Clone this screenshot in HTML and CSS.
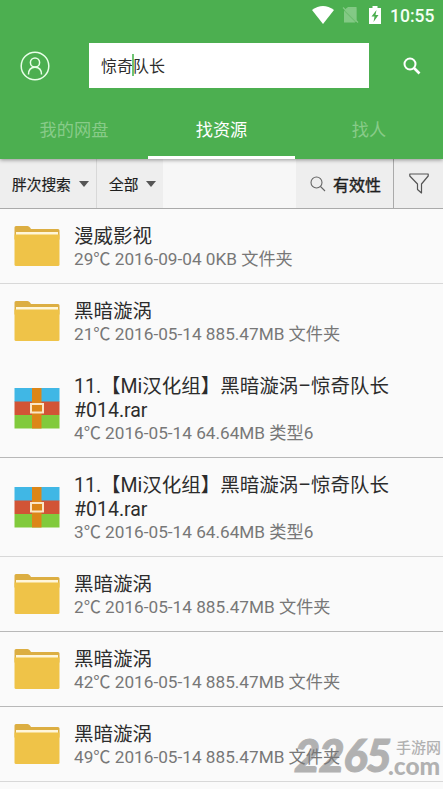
FILE: index.html
```
<!DOCTYPE html>
<html lang="zh-CN">
<head>
<meta charset="utf-8">
<title>找资源</title>
<link rel="stylesheet" href="styles.css">
</head>
<body>
<svg class="defs" width="0" height="0" aria-hidden="true">
  <symbol id="folder" viewBox="0 0 46 42">
    <path d="M.5 2.500A1.500 1.500 0 0 1 2 1h11.500q1.500 0 2.500 1.500l1 1.500H44a1.500 1.500 0 0 1 1.500 1.500v9H.5z" fill="#dcae42"/>
    <path d="M2 7h42v4H2z" fill="#fff6da"/>
    <path d="M.5 9.500h45v30a1.500 1.500 0 0 1-1.500 1.500H2a1.500 1.500 0 0 1-1.500-1.500z" fill="#efc348"/>
  </symbol>
  <symbol id="archive" viewBox="0 0 46 42">
    <path d="M.5 1h45v14H.5z" fill="#40b7e5"/>
    <path d="M.5 14.500h45V28H.5z" fill="#d15436"/>
    <path d="M.5 28h45v13.500H.5z" fill="#81ca3c"/>
    <path d="M18 1h9.500v40.500H18z" fill="#dc8618"/>
    <path d="M17 17h12v8.500H17z" fill="#dc8618" stroke="#fbe6c6" stroke-width="2"/>
  </symbol>
</svg>
<header class="appbar">
  <div class="status">
    <svg class="wifi" width="22" height="18" viewBox="0 0 22 18"><path d="M0 4Q11-4 22 4L11 18z" fill="#fff"/></svg>
    <svg class="sim" width="17" height="18" viewBox="0 0 17 18"><path d="M6 1h8.500v13.500L3 3.500zM2 5l11.500 11.500H2z" fill="#83c985"/><path d="M4.500 2.500H14.500v13.500H2V5z" fill="#83c985" opacity=".6"/><path d="M1 1.500l15 15" stroke="#83c985" stroke-width="1.300"/></svg>
    <svg class="battery" width="12" height="18" viewBox="0 0 12 18"><path d="M3.500 0h5v2H12v16H0V2h3.500z" fill="#fff"/><path d="M7.500 4L2.500 10.500h3L4.500 16l5-7h-3z" fill="#4caf50"/></svg>
    <span class="clock">10:55</span>
  </div>
  <div class="searchbar">
    <svg class="avatar" width="30" height="30" viewBox="0 0 30 30" fill="none" stroke="#e8ffe8" stroke-width="1.500"><circle cx="15" cy="15" r="13.800"/><circle cx="15" cy="11.500" r="4.600"/><path d="M8.500 23.500c0-4.500 2.500-7.300 6.500-7.300s6.500 2.800 6.500 7.300"/></svg>
    <div class="field"><span>惊奇</span><i class="caret"></i><span>队长</span></div>
    <svg class="go" width="18" height="18" viewBox="0 0 18 18" fill="none" stroke="#fff" stroke-width="2"><circle cx="7" cy="7" r="5.500"/><path d="M11 11l5.500 5.500" stroke-width="2.600"/></svg>
  </div>
  <nav class="tabs"><a>我的网盘</a><a class="on">找资源</a><a>找人</a></nav>
</header>
<section class="filters">
  <div class="drop source">胖次搜索<i class="arrow"></i></div>
  <div class="drop kind">全部<i class="arrow"></i></div>
  <div class="space"></div>
  <div class="valid"><svg width="16" height="16" viewBox="0 0 16 16" fill="none" stroke="#666" stroke-width="1.100"><circle cx="6.500" cy="6.500" r="5.500"/><path d="M10.500 10.500l4.500 4.500"/></svg>有效性</div>
  <div class="funnel"><svg width="20" height="22" viewBox="0 0 20 22" fill="none" stroke="#555" stroke-width="1.200" stroke-linejoin="round"><path d="M.8 1h18.400v2L12.500 11v9l-4-3.500V11L.8 3z"/></svg></div>
</section>
<main class="list">
  <article class="row"><svg class="icon"><use href="#folder"/></svg><div><h2>漫威影视</h2><p>29℃ 2016-09-04 0KB 文件夹</p></div></article>
  <article class="row plain"><svg class="icon"><use href="#folder"/></svg><div><h2>黑暗漩涡</h2><p>21℃ 2016-05-14 885.47MB 文件夹</p></div></article>
  <article class="row tall dark"><svg class="icon"><use href="#archive"/></svg><div><h2>11.【Mi汉化组】黑暗漩涡–惊奇队长<br>#014.rar</h2><p>4℃ 2016-05-14 64.64MB 类型6</p></div></article>
  <article class="row tall"><svg class="icon"><use href="#archive"/></svg><div><h2>11.【Mi汉化组】黑暗漩涡–惊奇队长<br>#014.rar</h2><p>3℃ 2016-05-14 64.64MB 类型6</p></div></article>
  <article class="row dark"><svg class="icon"><use href="#folder"/></svg><div><h2>黑暗漩涡</h2><p>2℃ 2016-05-14 885.47MB 文件夹</p></div></article>
  <article class="row dark"><svg class="icon"><use href="#folder"/></svg><div><h2>黑暗漩涡</h2><p>42℃ 2016-05-14 885.47MB 文件夹</p></div></article>
  <article class="row"><svg class="icon"><use href="#folder"/></svg><div><h2>黑暗漩涡</h2><p>49℃ 2016-05-14 885.47MB 文件夹</p></div></article>
</main>
<div class="mark"><b>2265</b><div><span>手游网</span><strong>.com</strong></div></div>
</body>
</html>
```
FILE: styles.css
```
* { box-sizing: border-box; }
body {
  margin: 0;
  height: 789px;
  overflow: hidden;
  position: relative;
  background: #fafafa;
  color: #2c2c2c;
  font-family: Roboto, "Noto Sans CJK SC", sans-serif;
}
.defs { position: absolute; }
.appbar {
  position: relative;
  height: 159px;
  background: #4caf50;
  box-shadow: 0 1px 4px rgba(0, 0, 0, .4);
}
.status {
  height: 43px;
  display: flex;
  justify-content: flex-end;
  align-items: flex-start;
  padding: 6px 9px 0 0;
}
.wifi { margin-right: 8px; }
.sim { margin-right: 10px; }
.battery { margin-right: 9px; }
.clock {
  width: 44px;
  font-size: 17.500px;
  line-height: 20px;
  font-weight: 500;
  color: #f4fff4;
  white-space: nowrap;
}
.searchbar {
  height: 45px;
  display: flex;
  align-items: center;
  padding: 0 22px 0 19.500px;
}
.field {
  width: 280px;
  height: 45px;
  margin-left: 39.500px;
  padding: 0 0 2px 12px;
  display: flex;
  align-items: center;
  background: #fff;
  font-size: 16px;
}
.caret {
  width: 2px;
  height: 22px;
  margin: 0 -1px;
  background: #70c574;
}
.go { margin-left: auto; }
.tabs {
  height: 71px;
  display: grid;
  grid-template-columns: 148px 147px 148px;
  font-size: 17.200px;
  color: #88cb89;
  text-align: center;
}
.tabs a { line-height: 85px; height: 71px; }
.tabs .on { color: #fff; border-bottom: 3px solid #fff; }
.filters {
  height: 50px;
  display: flex;
  border-bottom: 1px solid #aaa;
  background: #eee;
  font-size: 14.700px;
  color: #1e1e1e;
  -webkit-text-stroke: .2px #1e1e1e;
}
.filters > div { display: flex; align-items: center; }
.drop { justify-content: space-between; }
.source { width: 97px; padding: 0 7px 0 12px; border-right: 1px solid #d8d8d8; }
.kind { width: 66px; padding: 0 7px 0 12px; }
.arrow {
  border: 5.500px solid transparent;
  border-top: 6px solid #555;
  border-bottom: 0;
}
.space { flex: 1; background: #f7f7f7; }
.valid {
  width: 98px;
  padding-left: 14px;
  gap: 7px;
  border-right: 1px solid #aaa;
  font-size: 16px;
  -webkit-text-stroke: .4px #1e1e1e;
}
.funnel { width: 49px; justify-content: center; }
.row {
  height: 75px;
  display: flex;
  align-items: center;
  padding-left: 14px;
  border-bottom: 1px solid #d8d8d8;
}
.row.tall { height: 99px; }
.row.dark { border-bottom-color: #b8b8b8; }
.row.plain { border-bottom-color: transparent; }
.row > div { padding-top: 4px; }
.icon { width: 46px; height: 42px; margin-right: 14px; }
.row h2 {
  margin: 0;
  font-size: 19.500px;
  line-height: 23.500px;
  font-weight: 400;
  white-space: nowrap;
}
.row p {
  margin: 0;
  font-size: 17.200px;
  line-height: 23px;
  color: #777;
  white-space: nowrap;
}
.mark {
  position: absolute;
  left: 294px;
  top: 737px;
  display: flex;
  opacity: .55;
  color: #777;
}
.mark b {
  width: 94px;
  font: 900 italic 45px/36px Lato, sans-serif;
  letter-spacing: -1.500px;
  -webkit-text-stroke: 1px #777;
}
.mark div { display: flex; flex-direction: column; }
.mark span { font-size: 15px; line-height: 22px; font-weight: 500; padding-left: 8px; }
.mark strong { font: 900 24.500px/14px Lato, sans-serif; }
```
